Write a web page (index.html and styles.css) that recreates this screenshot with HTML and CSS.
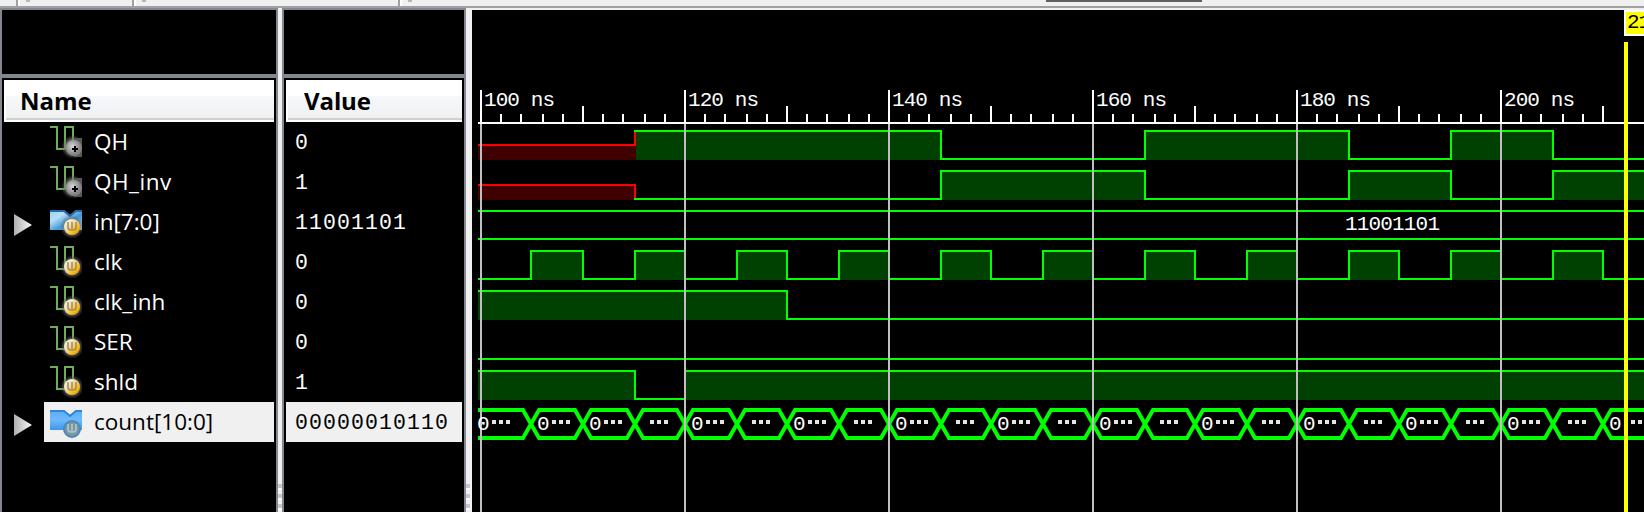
FILE: index.html
```html
<!DOCTYPE html>
<html lang="en">
<head>
<meta charset="utf-8">
<title>Waveform viewer</title>
<link rel="stylesheet" href="styles.css">
</head>
<body>
<svg class="defs" width="0" height="0" aria-hidden="true">
  <defs>
    <linearGradient id="blue" x1="0" y1="0" x2="1" y2="1"><stop offset="0" stop-color="#8fd0f5"/><stop offset=".3" stop-color="#b8e0f6"/><stop offset=".6" stop-color="#3f98d8"/><stop offset="1" stop-color="#a5d5f2"/></linearGradient>
    <linearGradient id="blueSel" x1="0" y1="0" x2="0" y2="1"><stop offset="0" stop-color="#58adf5"/><stop offset=".5" stop-color="#70b9fa"/><stop offset="1" stop-color="#3b98ea"/></linearGradient>
    <linearGradient id="gold" x1="0" y1="0" x2="1" y2="1"><stop offset="0" stop-color="#fff"/><stop offset=".4" stop-color="#eedcb0"/><stop offset=".7" stop-color="#fbb918"/><stop offset="1" stop-color="#c98a10"/></linearGradient>
    <radialGradient id="halo"><stop offset=".5" stop-color="#8a8a86"/><stop offset="1" stop-color="#555" stop-opacity="0"/></radialGradient>
    <radialGradient id="ball" cx=".4" cy=".4"><stop offset="0" stop-color="#d8d8d8"/><stop offset="1" stop-color="#828282"/></radialGradient>
    <linearGradient id="arrow" x1="0" y1="0" x2="1" y2="0"><stop offset="0" stop-color="#b0b0b0"/><stop offset="1" stop-color="#f8f8f8"/></linearGradient>
    <g id="wire"><path d="M0 5H7V27H15V5H23V18" fill="none" stroke="#6fae58" stroke-width="2"/></g>
    <g id="coin"><circle cx="22" cy="25" r="12" fill="url(#halo)"/><circle cx="22" cy="25" r="8" fill="url(#gold)"/><path d="M18 20v5q0 3 3 3h2q3 0 3-3v-5M22 20v7" fill="none" stroke="#a08c50" stroke-width="1.5"/></g>
    <g id="plus"><circle cx="23" cy="25" r="12" fill="url(#halo)"/><path d="M25 16h7v19h-8z" fill="#585858"/><circle cx="24" cy="26" r="8" fill="url(#ball)"/><path d="M22 27h6M25 24v6" stroke="#000" stroke-width="2"/></g>
    <symbol id="i-out" viewBox="0 0 32 36"><use href="#wire"/><use href="#plus"/></symbol>
    <symbol id="i-in" viewBox="0 0 32 36"><use href="#wire"/><use href="#coin"/></symbol>
    <symbol id="i-bus" viewBox="0 0 32 36"><path d="M0 8H14L20 13L26 8H32V28H0Z" fill="url(#blue)"/><path d="M0 9H14L20 14L26 9H32" fill="none" stroke="#2668a8" stroke-width="2"/><use href="#coin"/></symbol>
    <symbol id="i-sel" viewBox="0 0 32 36"><path d="M0 8H14L20 13L26 8H32V28H0Z" fill="url(#blueSel)"/><path d="M0 9H14L20 14L26 9H32" fill="none" stroke="#3184da" stroke-width="2"/><circle cx="22" cy="27" r="8" fill="#7898a4" stroke="#4f87b8" stroke-width="2"/><path d="M18 22v5q0 3 3 3h2q3 0 3-3v-5M22 22v7" fill="none" stroke="#b5c8cc" stroke-width="1.5"/></symbol>
    <symbol id="i-arrow" viewBox="0 0 18 22"><path d="M0 0L18 11L0 22Z" fill="url(#arrow)"/></symbol>
  </defs>
</svg>
<div class="app">
  <div class="toolbar">
    <span class="seg seg-a"></span><span class="seg seg-b"></span><span class="seg seg-c"></span><span class="seg seg-d"></span><span class="thumb"></span>
  </div>
  <div class="panes">
    <section class="pane names">
      <div class="blank"></div>
      <div class="list">
        <div class="head">Name</div>
        <div class="row"><span class="exp"></span><div class="cell"><svg class="icon"><use href="#i-out"/></svg><span>QH</span></div></div>
        <div class="row"><span class="exp"></span><div class="cell"><svg class="icon"><use href="#i-out"/></svg><span class="loose">QH_inv</span></div></div>
        <div class="row"><span class="exp"><svg class="arrow"><use href="#i-arrow"/></svg></span><div class="cell"><svg class="icon"><use href="#i-bus"/></svg><span>in[7:0]</span></div></div>
        <div class="row"><span class="exp"></span><div class="cell"><svg class="icon"><use href="#i-in"/></svg><span>clk</span></div></div>
        <div class="row"><span class="exp"></span><div class="cell"><svg class="icon"><use href="#i-in"/></svg><span>clk_inh</span></div></div>
        <div class="row"><span class="exp"></span><div class="cell"><svg class="icon"><use href="#i-in"/></svg><span>SER</span></div></div>
        <div class="row"><span class="exp"></span><div class="cell"><svg class="icon"><use href="#i-in"/></svg><span>shld</span></div></div>
        <div class="row"><span class="exp"><svg class="arrow"><use href="#i-arrow"/></svg></span><div class="cell selected"><svg class="icon"><use href="#i-sel"/></svg><span>count[10:0]</span></div></div>
      </div>
    </section>
    <div class="splitter"></div>
    <section class="pane values">
      <div class="blank"></div>
      <div class="list">
        <div class="head">Value</div>
        <div class="row val">0</div>
        <div class="row val">1</div>
        <div class="row val">11001101</div>
        <div class="row val">0</div>
        <div class="row val">0</div>
        <div class="row val">0</div>
        <div class="row val">1</div>
        <div class="row val selected">00000010110</div>
      </div>
    </section>
    <div class="splitter wide"></div>
    <svg class="waves" id="waves" viewBox="472 10 1172 502"></svg>
  </div>
</div>
<script src="waves.js"></script>
</body>
</html>
```
FILE: styles.css
```css
* { box-sizing: border-box; }
body { margin: 0; background: #000; overflow: hidden; }
.defs { position: absolute; }
.app { width: 1644px; height: 512px; display: flex; flex-direction: column; overflow: hidden; }
.toolbar { height: 8px; flex: none; display: flex; background: #f0f0f0; border-bottom: 2px solid #a0a0a0; }
.seg { height: 6px; flex: none; background: linear-gradient(#b8b8b8, #b8b8b8) 6px 0 / 4px 2px no-repeat; border-right: 2px solid #fff; box-shadow: inset -2px 0 #a0a0a0; }
.seg-a { width: 20px; background: none; }
.seg-b { width: 116px; }
.seg-c { width: 266px; }
.seg-d { width: 20px; border: 0; box-shadow: none; }
.thumb { height: 2px; width: 156px; margin-left: 624px; background: #606060; }
.panes { flex: 1; display: flex; background: #f0f0f0; min-height: 0; }
.pane { flex: none; border: 2px solid #828790; border-bottom: 0; background: #000; display: flex; flex-direction: column; }
.names { width: 278px; }
.values { width: 184px; }
.blank { height: 64px; flex: none; }
.list { flex: 1; border-top: 4px solid #828790; padding: 2px 2px 0; }
.head { height: 42px; padding: 3px 0 0 16px; font: bold 24px/36px "Open Sans", "Noto Sans", sans-serif; letter-spacing: 0; color: #000; background: linear-gradient(#fff 0 16px, #f6f8fa 16px, #eff0f2 38px, #d0d0d0 38px 40px, #fff 40px); box-shadow: inset 2px 0 #fff; }
.values .head { padding-left: 18px; letter-spacing: -.1px; }
.row { height: 40px; display: flex; color: #fff; }
.exp { width: 40px; padding: 12px 0 0 10px; flex: none; }
.arrow { display: block; width: 18px; height: 22px; }
.cell { flex: 1; display: flex; align-items: flex-start; padding-left: 6px; font: 22.5px/40px "Open Sans", "Noto Sans", sans-serif; letter-spacing: 0; white-space: nowrap; }
.cell span { margin-left: 12px; }
.cell .loose { letter-spacing: .5px; }
.icon { width: 32px; height: 36px; flex: none; }
.val { padding-left: 9px; font: 21.5px/43px "Liberation Mono", monospace; letter-spacing: 1.1px; }
.selected { background: #f0f0f0; color: #000; }
.splitter { width: 4px; flex: none; background: repeating-linear-gradient(#c8c8c8 0 4px, #fff 4px 6px, #f0f0f0 6px 10px) 0 476px / 4px 28px no-repeat; }
.wide { width: 6px; }
.waves { width: 1172px; height: 502px; margin-top: 2px; flex: none; background: #000; }
.ruler, .bits { fill: #fff; font: 21px "Liberation Mono", monospace; white-space: pre; }
.mark { fill: #000; }
```
FILE: waves.js
```js
// Timing diagram: ruler, signal traces and cursor.
var LEFT = 478, RIGHT = 1644;
var out = [];
function x(ns) {
  if (ns === 105) return 530;
  return 2 * Math.round(240 + (ns - 100) * 5.1 + 0.001);
}
function rect(a, y, w, h, color) {
  out.push('<rect x="' + a + '" y="' + y + '" width="' + w + '" height="' + h + '" fill="' + color + '"/>');
}
function text(a, y, cls, len, s) {
  out.push('<text class="' + cls + '" x="' + a + '" y="' + y + '" textLength="' + len + '">' + s + '</text>');
}
var GREEN = '#0f0', DARK = '#004000', RED = '#f00', MAROON = '#400000';

// steps: [start ns, level], level is 0, 1 or 'x'
function trace(row, steps) {
  var top = 130 + row * 40, prev = null;
  steps.forEach(function (s, i) {
    var a = i ? x(s[0]) : LEFT;
    var b = i + 1 < steps.length ? x(steps[i + 1][0]) : RIGHT;
    var y = s[1] === 1 ? top : s[1] === 0 ? top + 28 : top + 14;
    if (s[1] !== 0) rect(i ? a + 2 : a, y, b - a + (i ? 0 : 2), top + 30 - y, s[1] === 'x' ? MAROON : DARK);
    rect(a, y, b - a + 2, 2, s[1] === 'x' ? RED : GREEN);
    if (prev !== null) {
      var red = steps[i - 1][1] === 'x';
      var y0 = Math.min(prev, y), y1 = Math.max(prev, y);
      rect(a, y0, 2, y1 - y0 + 2, red ? RED : GREEN);
      if (red) rect(a, y, 2, 2, GREEN);
    }
    prev = y;
  });
}
trace(0, [[100, 'x'], [115, 1], [145, 0], [165, 1], [185, 0], [195, 1], [205, 0]]);
trace(1, [[100, 'x'], [115, 0], [145, 1], [165, 0], [185, 1], [195, 0], [205, 1]]);
rect(LEFT, 210, RIGHT - LEFT, 2, GREEN);
rect(LEFT, 238, RIGHT - LEFT, 2, GREEN);
var clk = [[100, 0]];
for (var t = 105; t <= 210; t += 5) clk.push([t, t % 10 ? 1 : 0]);
trace(3, clk);
trace(4, [[100, 1], [130, 0]]);
trace(5, [[100, 0]]);
trace(6, [[100, 1], [115, 0], [120, 1]]);

// bus cells
for (t = 100; t <= 210; t += 5) {
  var a = x(t) + 1, b = x(t + 5) + 1;
  var p = t === 100
    ? 'M478 410H' + (b - 8) + 'L' + b + ' 424L' + (b - 8) + ' 438H478'
    : 'M' + a + ' 424L' + (a + 8) + ' 410H' + (b - 8) + 'L' + b + ' 424L' + (b - 8) + ' 438H' + (a + 8) + 'Z';
  out.push('<path d="' + p + '" fill="none" stroke="#0f0" stroke-width="4"/>');
}

// ruler and grid
rect(LEFT, 122, RIGHT - LEFT, 2, '#fff');
for (t = 100; t < 212; t += 2) {
  if (t % 20 === 0) {
    rect(x(t), 90, 2, 32, '#fff');
    rect(x(t), 124, 2, 388, '#c0c0c0');
    text(x(t) + 4, 106, 'ruler', 71, t + ' ns');
  } else {
    rect(x(t), t % 10 ? 114 : 106, 2, t % 10 ? 8 : 16, '#fff');
  }
}

text(1345, 230, 'bits', 95, '11001101');
for (t = 100; t <= 210; t += 5) {
  var zero = t < 115 || t % 10 === 0;
  var start = t === 100 ? 477 : x(t) + 7;
  if (zero) text(start, 430, 'bits', 12, '0');
  var dot = t === 100 ? 492 : zero ? x(t) + 22 : x(t) + 16;
  for (var k = 0; k < 3; k++) rect(dot + k * 7, 420, 4, 4, '#e4e4e4');
}

// cursor
rect(1624, 42, 4, 470, '#ff0');
rect(1624, 10, 20, 26, '#fff');
rect(1626, 12, 18, 22, '#ff0');
text(1627, 28, 'ruler mark', 24, '21');
document.getElementById('waves').innerHTML = out.join('');
```
